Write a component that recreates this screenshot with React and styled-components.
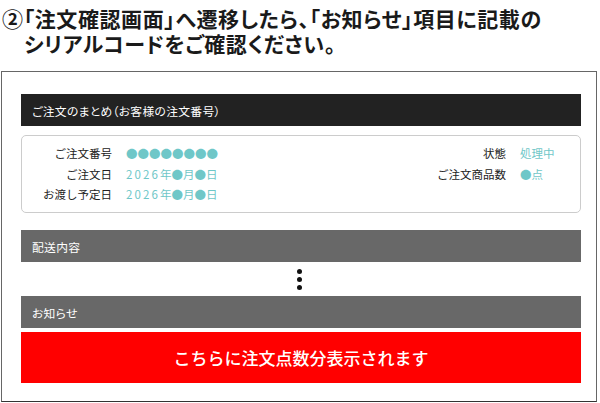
import React from 'react';
import styled, { createGlobalStyle } from 'styled-components';

const GlobalStyle = createGlobalStyle`
  html, body {
    margin: 0;
    padding: 0;
    background: #fff;
  }
  body {
    font-family: "Noto Sans CJK JP", "Noto Sans", sans-serif;
    color: #222;
  }
`;

const Page = styled.div`
  width: 600px;
  height: 403px;
  overflow: hidden;
`;

const Heading = styled.h1`
  margin: 6px 0 0;
  padding-left: 24px;
  font-size: 21px;
  line-height: 25px;
  font-weight: 700;
  font-feature-settings: "palt";
  letter-spacing: 0.6px;
  color: #1a1a1a;
  white-space: nowrap;
`;

const HeadLine = styled.span`
  display: block;
  margin-left: ${p => (p.$lead ? '-22px' : '0')};
`;

const Frame = styled.div`
  margin: 15px 0 0 1px;
  width: 596px;
  height: 331px;
  box-sizing: border-box;
  border: 1px solid #666;
  border-bottom-color: #333;
  padding: 22px 15px 0 19px;
  display: flex;
  flex-direction: column;
`;

const Bar = styled.div`
  height: 32px;
  display: flex;
  align-items: center;
  padding-left: 11px;
  background: ${p => (p.$dark ? '#222' : '#686868')};
  color: #fff;
  font-size: 11.8px;
  font-feature-settings: "palt";
  letter-spacing: 0.3px;
`;

const Card = styled.div`
  margin: 9px 0 17px;
  height: 78px;
  box-sizing: border-box;
  border: 1px solid #ccc;
  border-radius: 5px;
  padding: 7px 8px 0 21px;
  display: flex;
  justify-content: space-between;
  align-items: flex-start;
`;

const Details = styled.dl`
  margin: 0;
  display: grid;
  grid-template-columns: auto ${p => p.$valueWidth || 'auto'};
  column-gap: 14px;
  font-size: 11.5px;
  line-height: 20.5px;
`;

const Label = styled.dt`
  text-align: right;
  color: #222;
`;

const Value = styled.dd`
  margin: 0;
  color: #6fc7c8;
  white-space: nowrap;
`;

const Digits = styled.span`
  letter-spacing: 2.1px;
`;

const Ellipsis = styled.div`
  height: 34px;
  display: flex;
  flex-direction: column;
  align-items: center;
  justify-content: center;
  gap: 3px;
  padding-right: 3px;
`;

const Dot = styled.span`
  width: 5px;
  height: 5px;
  border-radius: 50%;
  background: #111;
`;

const Notice = styled.div`
  margin-top: 4px;
  height: 51px;
  background: #ff0000;
  color: #fff;
  font-size: 17px;
  font-weight: 500;
  display: flex;
  align-items: center;
  justify-content: center;
`;

const leftRows = [
  ['ご注文番号', '●●●●●●●●'],
  ['ご注文日', '2026年●月●日'],
  ['お渡し予定日', '2026年●月●日'],
];

const rightRows = [
  ['状態', '処理中'],
  ['ご注文商品数', '●点'],
];

// digits in the dates are set a little wider than the kana/kanji around them
const renderValue = value =>
  value.split(/(\d+)/).map((part, i) =>
    /^\d+$/.test(part) ? <Digits key={i}>{part}</Digits> : part
  );

const DetailList = ({ rows, valueWidth }) => (
  <Details $valueWidth={valueWidth}>
    {rows.map(([label, value]) => (
      <React.Fragment key={label}>
        <Label>{label}</Label>
        <Value>{renderValue(value)}</Value>
      </React.Fragment>
    ))}
  </Details>
);

export default function App() {
  return (
    <Page>
      <GlobalStyle />
      <Heading>
        <HeadLine $lead>②「注文確認画面」へ遷移したら、「お知らせ」項目に記載の</HeadLine>
        <HeadLine>シリアルコードをご確認ください。</HeadLine>
      </Heading>
      <Frame>
        <Bar $dark>ご注文のまとめ（お客様の注文番号）</Bar>
        <Card>
          <DetailList rows={leftRows} />
          <DetailList rows={rightRows} valueWidth="52px" />
        </Card>
        <Bar>配送内容</Bar>
        <Ellipsis>
          <Dot />
          <Dot />
          <Dot />
        </Ellipsis>
        <Bar>お知らせ</Bar>
        <Notice>こちらに注文点数分表示されます</Notice>
      </Frame>
    </Page>
  );
}
